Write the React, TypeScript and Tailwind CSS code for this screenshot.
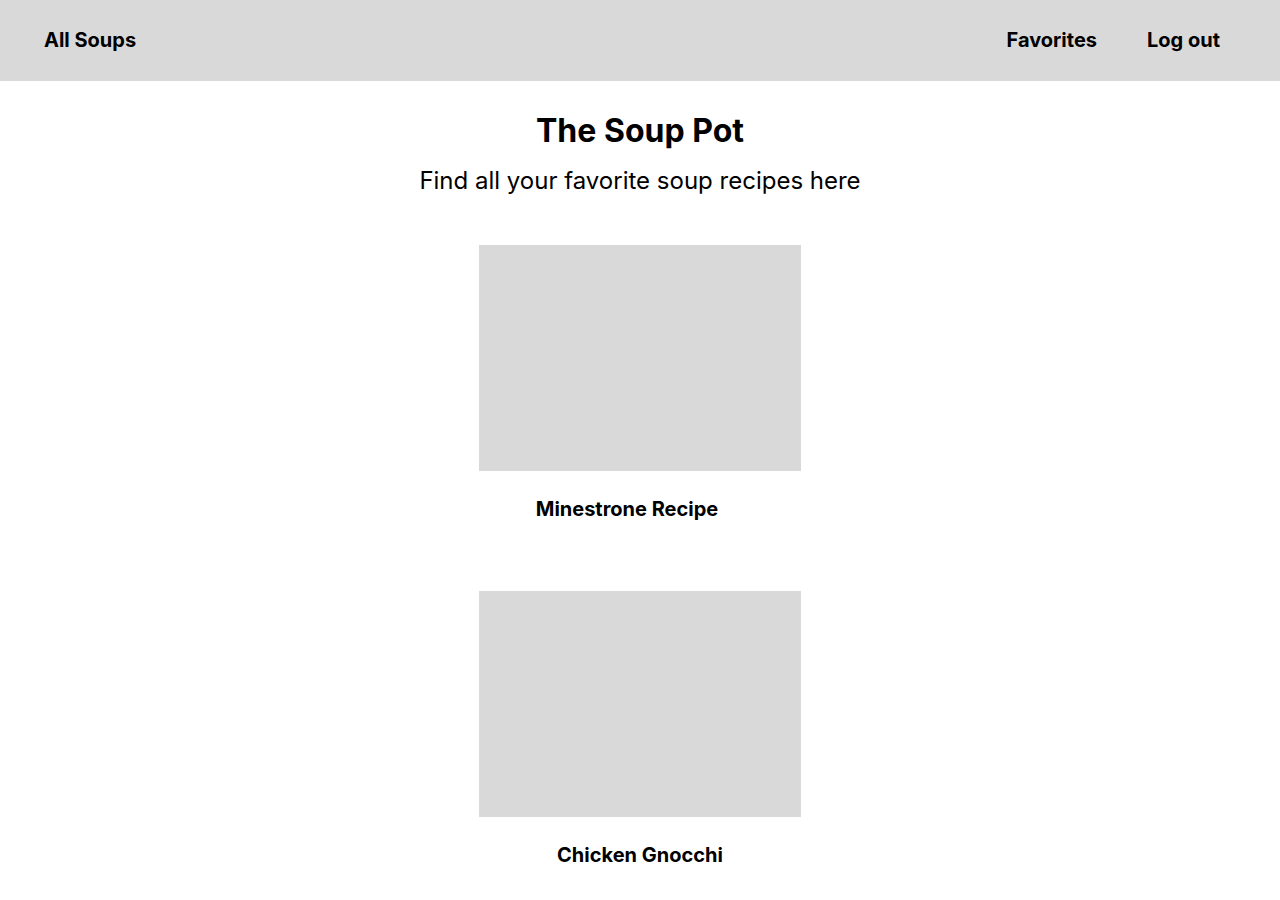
import React from "react";

const soups = [
  { id: 1, name: "Minestrone Recipe", pad: "pr-[26px]" },
  { id: 2, name: "Chicken Gnocchi", pad: "" },
];

const App = () => {
  return (
    <div className="min-h-screen bg-white text-black font-['Inter',sans-serif]">
      <nav className="flex h-[81px] items-center justify-between bg-[#d9d9d9] pb-[1px] pl-[44px] pr-[60px]">
        <a className="text-[20px] font-bold">All Soups</a>
        <div className="flex items-center gap-[50px]">
          <a className="text-[20px] font-bold">Favorites</a>
          <a className="text-[20px] font-bold">Log out</a>
        </div>
      </nav>
      <header className="mt-[30px] flex flex-col items-center">
        <h1 className="text-[32px] font-bold leading-[40px]">The Soup Pot</h1>
        <p className="mt-[14px] text-[24px] leading-[32px]">
          Find all your favorite soup recipes here
        </p>
      </header>
      <section className="mt-[48px] flex flex-col items-center gap-[68px] pb-10">
        {soups.map((soup) => (
          <article key={soup.id} className="flex flex-col items-center">
            <div className="h-[226px] w-[322px] bg-[#d9d9d9]" />
            <h3
              className={`mt-[24px] text-[20px] font-bold leading-[28px] ${soup.pad}`}
            >
              {soup.name}
            </h3>
          </article>
        ))}
      </section>
    </div>
  );
};

export default App;
